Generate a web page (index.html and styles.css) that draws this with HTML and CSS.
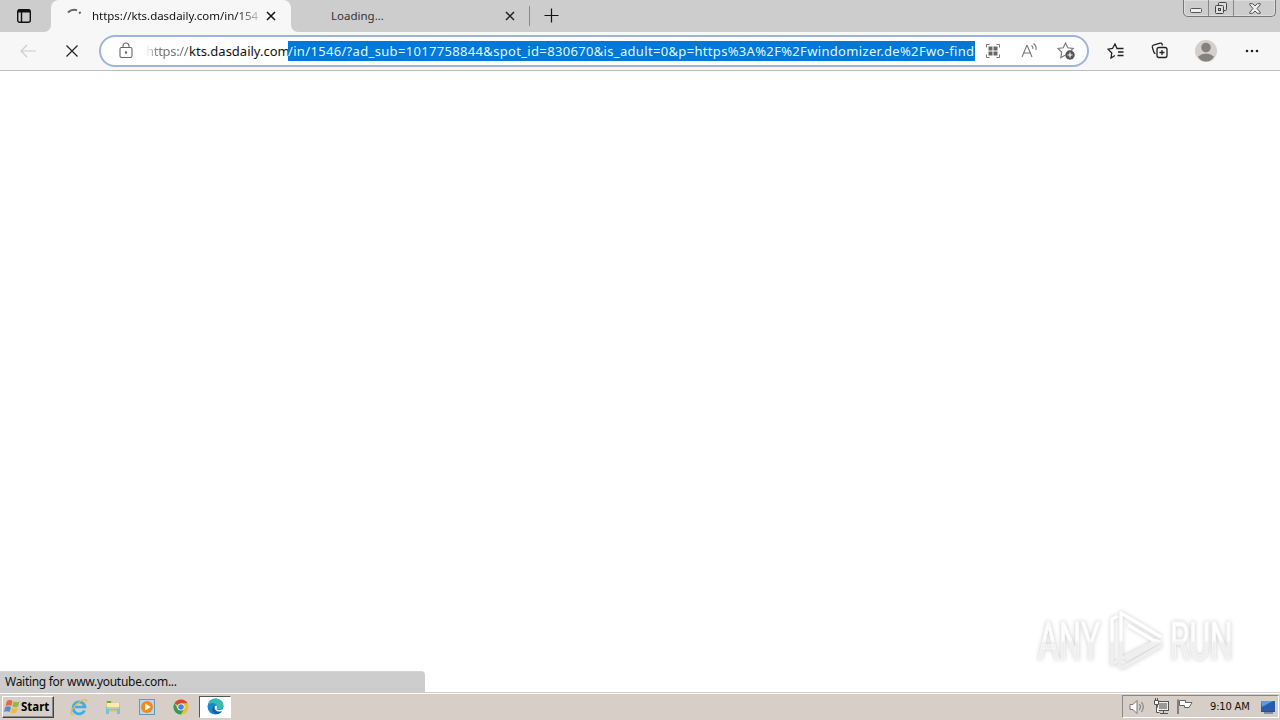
FILE: index.html
```html
<!DOCTYPE html>
<html lang="en">
<head>
  <meta charset="UTF-8">
  <meta name="viewport" content="width=device-width, initial-scale=1.0">
  <title>Browser</title>
  <link rel="stylesheet" href="styles.css">
</head>
<body>
  <header class="tab-strip">
    <div class="tab-actions">
      <svg width="16" height="16" viewBox="0 0 16 16" fill="none" stroke="#111" stroke-width="1.4"><rect x="1.7" y="1.7" width="12.6" height="12.6" rx="2"/><path d="M2 3h12" stroke-width="3"/><path d="M5.5 4v10"/></svg>
    </div>
    <div class="tab active">
      <svg class="spinner" width="16" height="16" viewBox="0 0 16 16" fill="none" stroke="#666" stroke-width="2.2"><path d="M2 4.5Q6 .5 11 2.3"/><path d="M13.2 4l1.3 1.5"/></svg>
      <span class="tab-title">https://kts.dasdaily.com/in/154</span>
      <svg class="tab-close" width="10" height="10" viewBox="0 0 10 10" stroke="#111" stroke-width="1.5"><path d="M1 1l8 8M9 1L1 9"/></svg>
    </div>
    <div class="tab inactive">
      <span class="tab-title">Loading...</span>
      <svg class="tab-close" width="10" height="10" viewBox="0 0 10 10" stroke="#222" stroke-width="1.5"><path d="M1 1l8 8M9 1L1 9"/></svg>
    </div>
    <div class="new-tab">
      <svg width="15" height="15" viewBox="0 0 15 15" stroke="#111" stroke-width="1.2"><path d="M7.5 .5v14M.5 7.5h14"/></svg>
    </div>
    <div class="window-buttons">
      <div class="win-btn minimize"><svg width="14" height="16" viewBox="0 0 14 16"><rect x="1.5" y="8.5" width="11" height="4" rx="1" fill="#eee" stroke="#555"/></svg></div>
      <div class="win-btn restore"><svg width="14" height="14" viewBox="0 0 14 14" fill="#ddd" stroke="#444"><rect x="4.5" y="1.5" width="8" height="8" rx="1"/><rect x="1.5" y="4.5" width="8" height="8" rx="1"/><rect x="4.5" y="7.5" width="2" height="2"/></svg></div>
      <div class="win-btn close"><svg width="12" height="11" viewBox="0 0 12 11" fill="#eee" stroke="#555"><path d="M.7.7h3L6 3 8.3.7h3v1L8 5.5l3.3 3.8v1h-3L6 8 3.7 10.3h-3v-1L4 5.5.7 1.7z"/></svg></div>
    </div>
  </header>

  <div class="toolbar">
    <div class="nav-btn back"><svg width="16" height="14" viewBox="0 0 16 14" fill="none" stroke="#ccc" stroke-width="1.2"><path d="M16 7H1M7 1L1 7l6 6"/></svg></div>
    <div class="nav-btn stop"><svg width="12" height="12" viewBox="0 0 12 12" stroke="#222" stroke-width="1.2"><path d="M.5.5l11 11M11.5.5l-11 11"/></svg></div>
    <div class="address-bar">
      <svg class="lock" width="14" height="17" viewBox="0 0 14 17" fill="none" stroke="#666" stroke-width="1.1"><rect x="1" y="5.5" width="12" height="10" rx="1.5"/><path d="M4 5.5V4a3 3 0 0 1 6 0v1.5"/><circle cx="7" cy="10.5" r=".7" fill="#666"/></svg>
      <div class="url"><span class="scheme">https://</span><span class="host">kts.dasdaily.com</span><span class="selected">/in/1546/?ad_sub=1017758844&amp;spot_id=830670&amp;is_adult=0&amp;p=https%3A%2F%2Fwindomizer.de%2Fwo-find</span></div>
      <div class="address-icons">
        <svg width="16" height="16" viewBox="0 0 16 16" fill="none" stroke="#777"><path d="M1.5 4.5v-3h3M11.5 1.5h3v3M14.5 11.5v3h-3M4.5 14.5h-3v-3"/><path fill="#666" stroke="none" d="M3.500 3.500h4v4h-4zM8.500 3.500h4v4h-4zM3.500 8.500h4v4h-4zM8.500 8.500h4v4h-4z"/></svg>
        <svg width="17" height="16" viewBox="0 0 17 16" fill="none" stroke="#777" stroke-width="1.1"><path d="M1 14L5.800 2.500h.4L11 14M2.800 10h6.500M10.500 2.500q1.800 1.200 1.500 3.500M12.500.5q3.300 2.500 2.500 6.500"/></svg>
        <svg width="18" height="18" viewBox="0 0 18 18" fill="none" stroke="#777" stroke-width="1.1"><path d="M8.500 13l-4.700 2.700.9-5.400L1 6.500l5.300-.8L8.500 1l2.300 4.700 5.400.8-2 2"/><circle cx="13" cy="13" r="4.700" fill="#555" stroke="none"/><path d="M13 10.500v5M10.500 13h5" stroke="#fff"/></svg>
      </div>
    </div>
    <div class="toolbar-icons">
      <svg width="18" height="16" viewBox="0 0 18 16" fill="none" stroke="#222" stroke-width="1.3"><path d="M8 12.500l-4 2.500.8-5L1 6.200l4.500-.7L8 1l2 4.500h6.500M11 9h5.500M10.500 12.500h6"/></svg>
      <svg width="17" height="17" viewBox="0 0 17 17" fill="none" stroke="#222" stroke-width="1.3"><rect x="6" y="5.500" width="10" height="10" rx="2"/><path d="M11 8v5M8.500 10.500h5M11.500 3.500L11 2q-.4-1.200-1.800-.8L2.500 3Q1 3.500 1.300 5l1.500 5q.4 1.500 1.700 1.500"/></svg>
      <svg width="24" height="24" viewBox="0 0 24 24"><circle cx="12" cy="12" r="11" fill="#d3cfcc"/><circle cx="12" cy="8.500" r="4.800" fill="#858180"/><path d="M4 17.500Q12 11.500 20 17.500 17.500 22.500 12 22.500T4 17.500z" fill="#858180"/></svg>
      <svg width="14" height="4" viewBox="0 0 14 4" fill="#222"><circle cx="2" cy="2" r="1.300"/><circle cx="7" cy="2" r="1.300"/><circle cx="12" cy="2" r="1.300"/></svg>
    </div>
  </div>

  <main class="page">
    <div class="watermark">
      <span class="word">ANY</span>
      <svg width="60" height="62" viewBox="0 0 60 62" fill="none" stroke-linejoin="round">
        <defs><linearGradient id="fade" x1="0" y1="0" x2="0" y2="62" gradientUnits="userSpaceOnUse"><stop offset=".5" stop-color="#fff"/><stop offset=".55" stop-color="#efefef"/></linearGradient></defs>
        <path d="M15 50V4l40 24M22 16l30 18M15 50l37-19M12 7l-6 3v45l6-3M20 51l35-19M16 59l40-23M16 59l-4-4" stroke="url(#fade)" stroke-width="3.4"/>
      </svg>
      <span class="word">RUN</span>
    </div>
    <div class="status-bubble">Waiting for www.youtube.com...</div>
  </main>

  <footer class="taskbar">
    <div class="start-button">
      <svg width="17" height="16" viewBox="0 0 17 16"><path d="M3 2q3-2 5.500 0L7.300 7Q4.500 5.500 1.500 7z" fill="#e9663c"/><path d="M9.500 2.500q3 1.600 6 0L14 7.500q-3 1.500-5.700 0z" fill="#8eb94a"/><path d="M1.200 8Q4 6.500 7 8L5.700 13Q3 11.500 0 13z" fill="#4f8fd0"/><path d="M8 8.700q3 1.500 5.800 0L12.300 13.500q-3 1.700-5.600 0z" fill="#f0bd38"/></svg>
      <span>Start</span>
    </div>
    <div class="task-icons">
      <div class="task"><svg width="18" height="18" viewBox="0 0 18 18" fill="none"><path d="M14.500 12.500A6 6 0 1 1 15 9H5" stroke="#3aaee8" stroke-width="2.7"/><path d="M3.500 16.500Q-.5 17 2 12 6 5 13 2q4-1.500 3.500 2" stroke="#eab83e" stroke-width="1.3"/></svg></div>
      <div class="task"><svg width="18" height="18" viewBox="0 0 18 18"><path d="M2 3h6l1 2h7v9H2z" fill="#e5c865"/><path d="M3 5h12v5H3z" fill="#f9ecaa"/><path d="M3 4h4" stroke="#62ac63" stroke-width="2"/><path d="M2 9h14v7h-3v-4H5v4H2z" fill="#82bdd8"/><path d="M3 10h12" stroke="#c4e7f2"/></svg></div>
      <div class="task"><svg width="18" height="18" viewBox="0 0 18 18"><rect x="1.500" y="1.500" width="15" height="15" fill="#b9d7eb" stroke="#5c9bc5"/><circle cx="9" cy="9" r="6" fill="#f08b17"/><path d="M7.200 5.500v7l5.500-3.500z" fill="#fff"/></svg></div>
      <div class="task"><svg width="16" height="16" viewBox="0 0 16 16"><circle cx="8" cy="8" r="7.500" fill="#eac22d"/><path d="M8 8L1.500 4.200A7.500 7.500 0 0 1 14.500 4.200H8z" fill="#db4437"/><path d="M1.500 4.200A7.500 7.500 0 0 0 8 15.500L11.300 9.500 4.700 9.800z" fill="#319b57"/><circle cx="8" cy="8" r="3.600" fill="#fff"/><circle cx="8" cy="8" r="2.800" fill="#4285e8"/></svg></div>
      <div class="task current"><svg width="17" height="17" viewBox="0 0 17 17"><circle cx="8.500" cy="8.500" r="8" fill="#1686cf"/><path d="M1 7Q3 .5 9 .5q7 .5 7.500 7 0 4-4.500 4-3 0-2.500-1.700 1-1.300 0-3Q8 4.500 5 5 2 5.500 1 7z" fill="#35bcb4"/><path d="M8 7q-2 2 0 5 3 3 7.500.8Q12 17.500 8 15.500 2 11 8 7z" fill="#155c9f"/><path d="M9 7.500q2 1 .5 3Q9.500 12 13 12l4-1-1 2q-5 1.500-7.500-1Q6.500 9 9 7.500z" fill="#fff"/></svg></div>
    </div>
    <div class="tray">
      <svg width="18" height="16" viewBox="0 0 18 16" fill="none" stroke="#777"><path d="M1 5.500h3l4-4v13l-4-4H1z" fill="#fff"/><path d="M10.500 5q2 3 0 6M12.500 3q3.500 5 0 10" stroke="#777"/></svg>
      <svg width="17" height="17" viewBox="0 0 17 17" fill="#eee" stroke="#555"><rect x="4.500" y="3.500" width="11" height="9"/><rect x="6" y="5" width="8" height="6" fill="#999" stroke="none"/><path d="M10.500 13v2M7 15.500h8"/><path d="M1.500 2.500h4v4h-4zM2.500 0v2M4.500 0v2M3.500 7v7.500h3" fill="#fff"/></svg>
      <svg width="18" height="17" viewBox="0 0 18 17" fill="#fff" stroke="#666"><path d="M3.500 2.500h6v2H16l-3 5H8.500v-2h-5z"/><path d="M2 1.500v14.500" stroke-width="1.5"/></svg>
      <span class="clock">9:10 AM</span>
      <svg class="desktop" width="16" height="14" viewBox="0 0 16 14"><path d="M1 1h14v10H1z" fill="#285cae"/><path d="M1 1h12L2 7z" fill="#5e9ade"/><path d="M1 11.500h14M4 13h9" stroke="#34506f"/></svg>
    </div>
  </footer>
</body>
</html>
```
FILE: styles.css
```css
* {
  box-sizing: border-box;
}

body {
  margin: 0;
  width: 100%;
  height: 100vh;
  overflow: hidden;
  display: flex;
  flex-direction: column;
  background-color: #fff;
  color: #111;
  font-family: "Noto Sans", "Open Sans", sans-serif;
}

svg {
  display: block;
  flex-shrink: 0;
}

.tab-strip {
  height: 32px;
  flex-shrink: 0;
  display: flex;
  background: linear-gradient(to right, #f7f7f7 300px, #cdcdcd 300px);
}

.tab-actions {
  width: 51px;
  padding: 8px 0 0 16px;
  background-color: #cdcdcd;
  border-radius: 0 0 7px 0;
}

.tab {
  display: flex;
  align-items: center;
  height: 32px;
  font-size: 11.5px;
  line-height: 16px;
  white-space: nowrap;
}

.tab-title {
  margin-top: -1px;
}

.tab.active {
  width: 240px;
  padding: 0 15px;
  border-radius: 8px 8px 0 0;
  background-color: #f7f7f7;
  box-shadow: 0 -10px 0 #cdcdcd;
}

.tab.active .tab-title {
  width: 167px;
  margin-left: 10px;
  letter-spacing: -0.03px;
  -webkit-mask-image: linear-gradient(to right, #000 145px, transparent 172px);
}

.tab.active .tab-close {
  margin-left: 7px;
}

.tab.inactive {
  width: 238px;
  padding: 0 14px 0 40px;
  justify-content: space-between;
  border-radius: 0 0 0 7px;
  background-color: #cdcdcd;
  color: #333;
}

.new-tab {
  height: 20px;
  margin-top: 6px;
  padding: 2px 0 0 14px;
  border-left: 1px solid #888;
}

.window-buttons {
  display: flex;
  width: 93px;
  height: 17px;
  margin-left: auto;
  margin-right: 4px;
  border: 1px solid #777;
  border-top: 0;
  border-radius: 0 0 5px 5px;
  box-shadow: inset 0 0 0 1px #ddd;
}

.win-btn {
  display: flex;
  align-items: center;
  justify-content: center;
  width: 25px;
  border-right: 1px solid #888;
}

.win-btn.close {
  flex: 1;
  border: 0;
}

.toolbar {
  display: flex;
  align-items: center;
  height: 39px;
  flex-shrink: 0;
  padding-bottom: 1px;
  background-color: #f7f7f7;
  border-bottom: 1px solid #bdbdbd;
}

.nav-btn {
  width: 44px;
  display: flex;
  justify-content: center;
}

.nav-btn.back {
  margin-left: 6px;
}

.address-bar {
  display: flex;
  align-items: center;
  width: 990px;
  height: 32px;
  margin-left: 5px;
  padding-left: 18px;
  border: 2px solid #9db4dc;
  border-radius: 16px;
  background-color: #fff;
}

.url {
  display: flex;
  margin-left: 13px;
  font-size: 13px;
  line-height: 20px;
  white-space: nowrap;
}

.scheme {
  width: 43px;
  color: #777;
  letter-spacing: -0.3px;
  -webkit-mask-image: linear-gradient(to right, transparent, #000 12px);
}

.host {
  width: 99px;
}

.selected {
  width: 687px;
  background-color: #0078d7;
  color: #e4f7ff;
  letter-spacing: 0.33px;
}

.address-icons {
  display: flex;
  align-items: center;
  gap: 20px;
  margin-left: 10px;
}

.address-icons svg:last-child {
  margin-left: -1px;
}

.toolbar-icons {
  display: flex;
  align-items: center;
  margin-left: 18px;
}

.toolbar-icons svg:nth-child(2) {
  margin-left: 26px;
}

.toolbar-icons svg:nth-child(3) {
  margin-left: 26px;
}

.toolbar-icons svg:nth-child(4) {
  margin-left: 27px;
}

.page {
  position: relative;
  flex: 1;
}

.watermark {
  position: absolute;
  right: 48px;
  bottom: 21px;
  display: flex;
  align-items: center;
  gap: 4px;
  filter: drop-shadow(0 0 2px #ccc);
}

/* the box is widened so the squeezed letters keep their full fill */
.word {
  box-sizing: content-box;
  width: 62px;
  padding: 4px 100px 0 0;
  margin-right: -100px;
  font-family: Roboto, sans-serif;
  font-size: 52px;
  line-height: 54px;
  color: transparent;
  background: linear-gradient(#fff 50%, #efefef 55%);
  -webkit-background-clip: text;
  background-clip: text;
  -webkit-text-stroke: 1px #f7f7f7;
  transform: scaleX(0.61);
  transform-origin: left;
}

.word:first-child {
  width: 64px;
}

.status-bubble {
  position: absolute;
  left: 0;
  bottom: 0;
  width: 425px;
  height: 21px;
  padding-left: 5px;
  border-top: 1px solid #d5d5d5;
  border-radius: 0 4px 0 0;
  background-color: #cdcdcd;
  font-size: 12px;
  line-height: 20px;
  letter-spacing: -0.29px;
}

.taskbar {
  display: flex;
  align-items: center;
  height: 28px;
  flex-shrink: 0;
  border-top: 1px solid #d4d0c8;
  box-shadow: inset 0 1px 0 #fff;
  background-color: #d6cec7;
}

.start-button {
  display: flex;
  align-items: center;
  width: 52px;
  height: 22px;
  margin-left: 2px;
  padding-left: 1px;
  border: 1px solid;
  border-color: #fff #444 #444 #fff;
  box-shadow: inset -1px -1px 0 #888;
  color: #000;
  font-size: 11.5px;
  font-weight: bold;
}

.task-icons {
  display: flex;
  margin-left: 9px;
}

.task {
  display: flex;
  align-items: center;
  justify-content: center;
  width: 32px;
  height: 22px;
  margin-right: 2px;
}

.task.current {
  border: 1px solid;
  border-color: #555 #fff #fff #555;
  background-color: #fff;
}

.tray {
  display: flex;
  align-items: center;
  width: 157px;
  height: 23px;
  margin-left: auto;
  margin-right: 1px;
  padding-left: 6px;
  border: 1px solid;
  border-color: #888 #fff #fff #888;
}

.tray svg + svg {
  margin-left: 6px;
}

.clock {
  width: 42px;
  margin-left: 16px;
  font-family: "DejaVu Sans Condensed", "DejaVu Sans", sans-serif;
  font-size: 11px;
  letter-spacing: -0.15px;
  white-space: nowrap;
}

.desktop {
  margin-left: 8px;
}
```
